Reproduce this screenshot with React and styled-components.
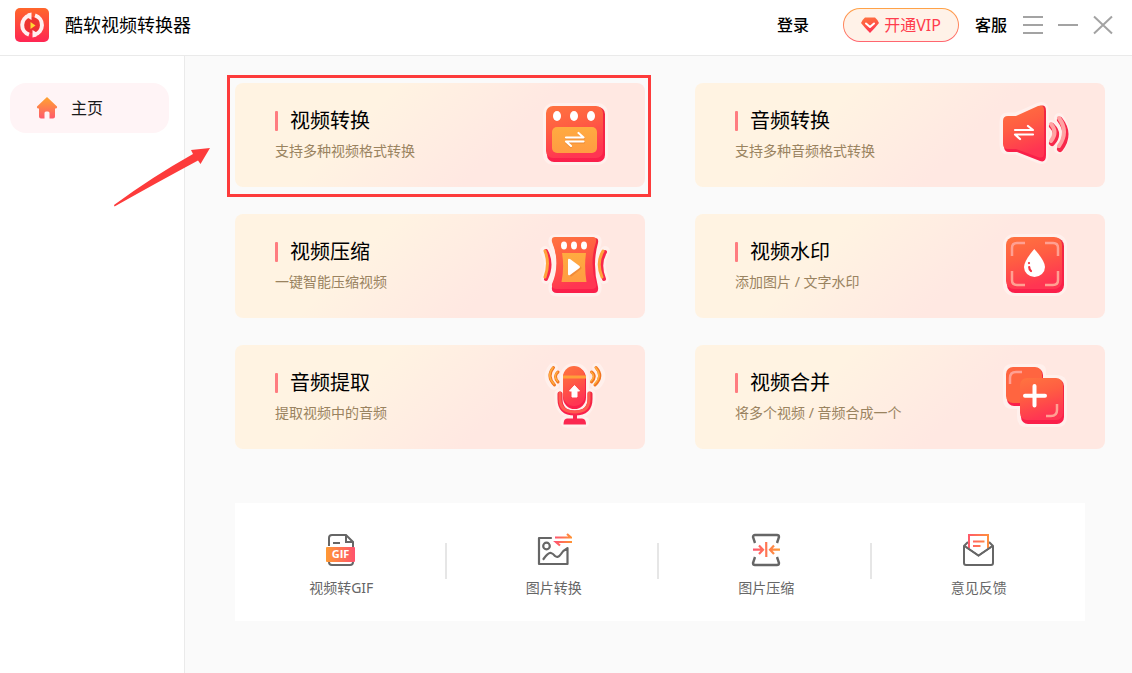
import styled, { createGlobalStyle } from 'styled-components';

const features = [
    { title: '视频转换', text: '支持多种视频格式转换', Icon: ConvertIcon, marked: true },
    { title: '音频转换', text: '支持多种音频格式转换', Icon: SpeakerIcon },
    { title: '视频压缩', text: '一键智能压缩视频', Icon: SqueezeIcon },
    { title: '视频水印', text: '添加图片 / 文字水印', Icon: WatermarkIcon },
    { title: '音频提取', text: '提取视频中的音频', Icon: MicIcon },
    { title: '视频合并', text: '将多个视频 / 音频合成一个', Icon: MergeIcon },
];

const tools = [
    { label: '视频转GIF', Icon: GifIcon },
    { label: '图片转换', Icon: PictureIcon },
    { label: '图片压缩', Icon: PictureSqueezeIcon },
    { label: '意见反馈', Icon: MailIcon },
];

export default function App(){
    return(
        <>
            <GlobalStyle />
            <Gradients />
            <Page>
                <Header>
                    <Logo />
                    <AppName>酷软视频转换器</AppName>
                    <HeaderButton>登录</HeaderButton>
                    <VipButton>
                        <Diamond />
                        开通VIP
                    </VipButton>
                    <HeaderButton>客服</HeaderButton>
                    <WindowButtons>
                        <IconButton aria-label='菜单'>
                            <svg width='20' height='20'><path d='M0 2H20M0 10H20M0 18H20' /></svg>
                        </IconButton>
                        <IconButton aria-label='最小化'>
                            <svg width='20' height='20'><path d='M0 10H20' /></svg>
                        </IconButton>
                        <IconButton aria-label='关闭'>
                            <svg width='20' height='20'><path d='M1 1.5L19 18.5M19 1.5L1 18.5' /></svg>
                        </IconButton>
                    </WindowButtons>
                </Header>
                <Body>
                    <Sidebar>
                        <NavItem href='#home'>
                            <HomeIcon />
                            主页
                        </NavItem>
                    </Sidebar>
                    <Main>
                        <Features>
                            {features.map(({ title, text, Icon, marked }) => (
                                <Card key={title}>
                                    <span>
                                        <CardTitle>{title}</CardTitle>
                                        <CardText>{text}</CardText>
                                    </span>
                                    <Icon />
                                    {marked && <Marker />}
                                    {marked && (
                                        <Arrow width='96' height='60' viewBox='0 0 96 60'>
                                            <path d='M0 58Q38 30 79 7L77 3L96 1L86.500 17L84 13.500Q44 35 .5 59.500Z' fill='#fd3b3b' />
                                        </Arrow>
                                    )}
                                </Card>
                            ))}
                        </Features>
                        <Tools>
                            {tools.map(({ label, Icon }) => (
                                <Tool key={label}>
                                    <Icon />
                                    {label}
                                </Tool>
                            ))}
                        </Tools>
                    </Main>
                </Body>
            </Page>
        </>
    )
}

// shared by every icon below
function Gradients(){
    return(
        <HiddenSvg width='0' height='0' aria-hidden='true'>
            <defs>
                <linearGradient id='hot' x1='0' y1='0' x2='0.3' y2='1'>
                    <stop offset='0' stopColor='#ff7440' />
                    <stop offset='0.45' stopColor='#ff5e42' />
                    <stop offset='1' stopColor='#ff3552' />
                </linearGradient>
                <linearGradient id='deep' x1='0' y1='0' x2='0' y2='1'>
                    <stop offset='0' stopColor='#f0283f' />
                    <stop offset='1' stopColor='#fb1f4b' />
                </linearGradient>
                <linearGradient id='amber' x1='0' y1='0' x2='0' y2='1'>
                    <stop offset='0' stopColor='#ffab40' />
                    <stop offset='1' stopColor='#ff9c42' />
                </linearGradient>
                <linearGradient id='house' x1='0' y1='0' x2='0' y2='1'>
                    <stop offset='0' stopColor='#ffa42f' />
                    <stop offset='1' stopColor='#ff5a6c' />
                </linearGradient>
                <linearGradient id='side' gradientUnits='userSpaceOnUse' x1='3' y1='0' x2='33' y2='0'>
                    <stop offset='0' stopColor='#ff9a33' />
                    <stop offset='1' stopColor='#ff5070' />
                </linearGradient>
                <linearGradient id='sideBack' gradientUnits='userSpaceOnUse' x1='5' y1='0' x2='32' y2='0'>
                    <stop offset='0' stopColor='#ff5470' />
                    <stop offset='1' stopColor='#ff9a33' />
                </linearGradient>
                <linearGradient id='swap' gradientUnits='userSpaceOnUse' x1='19' y1='0' x2='36' y2='0'>
                    <stop offset='0' stopColor='#ff5470' />
                    <stop offset='1' stopColor='#ff9433' />
                </linearGradient>
            </defs>
        </HiddenSvg>
    )
}

function Logo(){
    return(
        <svg width='34' height='34' viewBox='0 0 34 34'>
            <defs>
                <linearGradient id='logo' x1='0' y1='0' x2='0' y2='1'>
                    <stop offset='0' stopColor='#ff662b' />
                    <stop offset='1' stopColor='#ff2653' />
                </linearGradient>
            </defs>
            <rect width='34' height='34' rx='5' fill='url(#logo)' />
            <circle cx='17' cy='17' r='8' fill='#e62c2c' opacity='.7' />
            <path d='M14.500 7.500A10 10 0 0 0 14 26.600M19.500 26.600A10 10 0 0 0 20 7.400' fill='none' stroke='#fff0f0' strokeWidth='4' />
            <path d='M12.500 5.500L16.500 4.500V12L12.500 9.500ZM21.500 28.500L17.500 29.500V22L21.500 24.500Z' fill='#fff0f0' />
            <path d='M15.500 14L20.500 17.500L15.500 21Z' fill='#ffd834' />
        </svg>
    )
}

function Diamond(){
    return(
        <svg width='18' height='16' viewBox='0 0 18 16'>
            <path d='M4 .5H14Q17 3 18 6Q14 11 9 16Q4 11 0 6Q1 3 4 .5Z' fill='url(#hot)' />
            <path d='M5 6.500L9 10L13 6.500' fill='none' stroke='#fff' strokeWidth='2' strokeLinecap='round' strokeLinejoin='round' />
        </svg>
    )
}

function HomeIcon(){
    return(
        <svg width='22' height='22' viewBox='0 0 22 22'>
            <path d='M11 0L21 9.500Q21.500 11.500 19 11.500V19.500Q19 21.500 17 21.500H13.500V16Q13.500 14.500 12 14.500H10Q8.500 14.500 8.500 16V21.500H5Q3 21.500 3 19.500V11.500Q.5 11.500 1 9.500Z' fill='url(#house)' />
        </svg>
    )
}

function ConvertIcon(){
    return(
        <svg width='80' height='80' viewBox='0 0 80 80'>
            <rect x='8' y='8' width='65' height='62' rx='10' fill='#fff' opacity='.35' />
            <rect x='12' y='12' width='58' height='55' rx='7' fill='url(#deep)' />
            <rect x='11' y='11' width='57' height='52' rx='7' fill='url(#hot)' />
            <g fill='#fff'>
                <ellipse cx='22' cy='21' rx='4' ry='5' />
                <ellipse cx='39' cy='21' rx='4' ry='5' />
                <ellipse cx='56' cy='21' rx='4' ry='5' />
            </g>
            <rect x='17' y='32' width='45' height='26' rx='5' fill='url(#amber)' />
            <g fill='none' strokeWidth='2.2' strokeLinecap='round' strokeLinejoin='round'>
                <path d='M31 43.500H49L44 39M49 47.500H31L36 52' stroke='#d9742c' opacity='.5' />
                <path d='M31 42.500H48.500L43.500 38M48.500 46.500H31L36 51' stroke='#fff' />
            </g>
        </svg>
    )
}

function SpeakerIcon(){
    return(
        <svg width='80' height='80' viewBox='0 0 80 80'>
            <g stroke='#fff' strokeWidth='7' opacity='.35' strokeLinejoin='round' strokeLinecap='round'>
                <path d='M13 21H21L44 11Q50 9 50 16V60Q50 67 44 65L21 56H13Q8 56 8 50V27Q8 21 13 21Z' />
                <path d='M64 23Q75 38 64 54M56 30Q64 38 56 47' fill='none' strokeWidth='10' />
            </g>
            <path d='M14 22H22L45 11Q51 9 51 16V60Q51 68 45 66L22 57H14Q9 57 9 51V28Q9 22 14 22Z' fill='url(#deep)' />
            <path d='M13 21H21L43 11Q49 9 49 15V58Q49 64 43 62L21 54H13Q8 54 8 49V26Q8 21 13 21Z' fill='url(#hot)' />
            <path d='M20 35H38L33 31M38 39.500H20L25 44' fill='none' stroke='#fff' strokeWidth='2.2' strokeLinecap='round' strokeLinejoin='round' />
            <g fill='none' strokeLinecap='round'>
                <path d='M57 31Q65 39 57 48M65 25Q76 39 65 54' stroke='#f8284b' strokeWidth='6' />
                <path d='M56 29Q63 37 56 46M64 23Q74 37 64 51' stroke='#ffa3a3' strokeWidth='4' />
            </g>
        </svg>
    )
}

function SqueezeIcon(){
    return(
        <svg width='80' height='80' viewBox='0 0 80 80'>
            <g fill='none' stroke='#fff' opacity='.35' strokeLinejoin='round' strokeLinecap='round'>
                <path d='M20 12H60Q64 12 63 17Q56 38 63 60Q64 67 59 67H22Q16 67 17 60Q26 38 17 17Q16 12 20 12Z' strokeWidth='7' fill='#fff' />
                <path d='M10 25Q18 38 11 53M70 25Q62 38 69 53' strokeWidth='10' />
            </g>
            <path d='M21 12H60Q64 12 63 17Q57 38 63 61Q64 67 59 67H22Q16 67 17 61Q26 38 18 17Q17 12 21 12Z' fill='url(#deep)' />
            <path d='M20 11H58Q62 11 61 16Q54 37 61 58Q62 63 57 63H22Q16 63 17 58Q26 37 17 16Q16 11 20 11Z' fill='url(#hot)' />
            <g fill='#fff'>
                <ellipse cx='29' cy='19.500' rx='3' ry='4' />
                <ellipse cx='39' cy='19.500' rx='3' ry='4' />
                <ellipse cx='49' cy='19.500' rx='3' ry='4' />
            </g>
            <path d='M27 27H51Q49 41 51.500 56H26.500Q29.500 41 27 27Z' fill='url(#amber)' />
            <path d='M35 35.500Q35 34 37 35L46 41Q47 42 46 43L37 50Q35 51.500 35 49Z' fill='#e3762d' opacity='.5' />
            <path d='M33 34Q33 32 35 33L44.500 40Q45.500 41 44.500 42L35 49Q33 50 33 48Z' fill='#fff' />
            <g fill='none' strokeLinecap='round' strokeWidth='4'>
                <path d='M11 25Q18 38 11 53M70 26Q63 38 69 53' stroke='#f8284b' />
                <path d='M10 25Q15 37 10 51M68 25Q61 37 67 51' stroke='#ffa33c' strokeWidth='3' />
            </g>
        </svg>
    )
}

function WatermarkIcon(){
    return(
        <svg width='80' height='80' viewBox='0 0 80 80'>
            <rect x='8' y='8' width='64' height='62' rx='11' fill='#fff' opacity='.35' />
            <rect x='12' y='12' width='57' height='55' rx='8' fill='url(#deep)' />
            <rect x='11' y='11' width='56' height='52' rx='8' fill='url(#hot)' />
            <path d='M17 30V22Q17 17 22 17H30M50 17H58Q63 17 63 22V30M63 45V54Q63 59 58 59H50M30 59H22Q17 59 17 54V45' fill='none' stroke='#ffa092' strokeWidth='2.5' />
            <path d='M39.300 23Q50 35 50 41A10.500 10 0 0 1 29 41Q29 35 39.300 23Z' fill='#fff' />
            <path d='M34 37V37.100M34.200 41Q34.200 43.500 36 45' fill='none' stroke='#f5323f' strokeWidth='2.2' strokeLinecap='round' />
        </svg>
    )
}

function MicIcon(){
    return(
        <svg width='80' height='80' viewBox='0 0 80 80'>
            <g fill='none' stroke='#fff' opacity='.35' strokeLinecap='round' strokeLinejoin='round'>
                <rect x='28' y='9' width='23' height='43' rx='11' fill='#fff' strokeWidth='6' />
                <path d='M25 37V41Q25 56 39.500 56Q55 56 55 41V37M40 56V64M31 65H49' strokeWidth='11' />
                <path d='M18 11Q11 20 19 28M62 11Q69 20 61 28' strokeWidth='10' />
            </g>
            <g fill='none' stroke='url(#deep)' strokeLinecap='round' strokeWidth='5'>
                <path d='M25 37V42Q25 56 39.700 56Q55 56 55 42V37' />
                <path d='M40 57V63' stroke='#f8284b' strokeWidth='4' />
            </g>
            <path d='M25 36V42Q25 55 39.500 55Q54 55 54 42V36' fill='none' stroke='#ff5b50' strokeWidth='3' strokeLinecap='round' />
            <path d='M32 61.500H47Q51 61.500 51 67.500H28.500Q28.500 61.500 32 61.500Z' fill='#fb2850' />
            <rect x='28' y='10' width='23' height='42' rx='11.500' fill='url(#deep)' />
            <rect x='28' y='9' width='22' height='40' rx='11' fill='url(#hot)' />
            <path d='M28 20H51' stroke='#ffa03a' strokeWidth='3' />
            <path d='M39.500 28.500L44.500 34H42V40H37V34H34.500Z' fill='#fff' stroke='#fff' strokeLinejoin='round' />
            <g fill='none' strokeLinecap='round'>
                <path d='M18.500 10.500Q11 19 19.500 28M23 15Q18 19 23 25M61 10.500Q69 19 60 28M56.500 15Q62 19 56.500 25' stroke='#f27420' strokeWidth='3' />
                <path d='M18 10.500Q11 19 19 27M22.500 15Q18 19 22.500 24M60.500 10.500Q68 19 59.500 27M56 15Q61 19 56 24' stroke='#ffad40' strokeWidth='1.5' />
            </g>
        </svg>
    )
}

function MergeIcon(){
    return(
        <svg width='80' height='80' viewBox='0 0 80 80'>
            <g fill='#fff' opacity='.35'>
                <path d='M17 7H44Q51 7 51 14V18H62Q72 18 72 28V60Q72 70 62 70H32Q22 70 22 60V52H18Q8 52 8 43V16Q8 7 17 7Z' />
            </g>
            <rect x='12' y='11' width='36' height='38' rx='7' fill='url(#deep)' />
            <rect x='11' y='10' width='36' height='36' rx='7' fill='#ff6540' />
            <rect x='26' y='22' width='43' height='45' rx='7' fill='url(#deep)' />
            <rect x='25' y='21' width='43' height='42' rx='7' fill='url(#hot)' />
            <path d='M15 27V21Q15 15 21 15H27M62 47V53Q62 59 56 59H51' fill='none' stroke='#ffa092' strokeWidth='2.5' />
            <path d='M39.500 29V48.500M30 38.700H50' stroke='#fff' strokeWidth='4' strokeLinecap='round' />
        </svg>
    )
}

function GifIcon(){
    return(
        <svg width='36' height='36' viewBox='0 0 36 36'>
            <path d='M6 14V6Q6 3 9 3H23L30 10V14M6 30Q6 33 9 33H27Q30 33 30 30M23 3V10H30M10 11H17' fill='none' stroke='#666' strokeWidth='2' />
            <path d='M6 14V6M30 10V16' stroke='#666' strokeWidth='2' />
            <rect x='3' y='15' width='29' height='15' rx='1' fill='url(#side)' />
            <GifText x='17.500' y='26' textAnchor='middle'>GIF</GifText>
        </svg>
    )
}

function PictureIcon(){
    return(
        <svg width='36' height='36' viewBox='0 0 36 36'>
            <g fill='none' stroke='#666' strokeWidth='2.2' strokeLinejoin='round' strokeLinecap='round'>
                <path d='M15 6H3V32H31.500V16M7.500 27Q12 20.500 15 21Q17 21.500 19 24Q22 26.500 25 22Q27 18.500 31 16.500' />
                <circle cx='10.500' cy='14' r='3.300' />
            </g>
            <path d='M19 5.500H35L31 2M36 10H20L24 13.500' fill='none' stroke='url(#swap)' strokeWidth='2.2' />
        </svg>
    )
}

function PictureSqueezeIcon(){
    return(
        <svg width='36' height='36' viewBox='0 0 36 36'>
            <path d='M7 11L5 5Q5 3 7 3H29Q31 3 31 5L29 11M7 25L5 31Q5 33 7 33H29Q31 33 31 31L29 25' fill='none' stroke='#666' strokeWidth='2.4' />
            <path d='M5 17.600L14.500 17.700M11 13.500L15 17.700L11 22M18.200 10L18.300 25M32 17.600L22.500 17.700M26 13.500L22 17.700L26 22' fill='none' stroke='url(#sideBack)' strokeWidth='2.2' />
        </svg>
    )
}

function MailIcon(){
    return(
        <svg width='36' height='36' viewBox='0 0 36 36'>
            <path d='M7 10L3 14V31Q3 33 5 33H30Q32 33 32 31V14L28 10M3.500 14L17.500 23.500L31.500 14' fill='none' stroke='#666' strokeWidth='2' strokeLinejoin='round' />
            <path d='M8 16V3H27V16L17.500 22.500Z' fill='#fff' />
            <path d='M8 16V3H27V16M12 9.500L23.500 9.600M12 14L19.500 14.100' fill='none' stroke='url(#sideBack)' strokeWidth='2' />
            <path d='M5 15L17.500 23.500L30 15' fill='none' stroke='#666' strokeWidth='2' />
        </svg>
    )
}

const GlobalStyle = createGlobalStyle`
    * {
        box-sizing: border-box;
    }
    body {
        margin: 0;
        font-family: 'Noto Sans', 'Noto Sans CJK SC', sans-serif;
        color: #000000;
    }
    button {
        font-family: inherit;
        color: inherit;
        border: none;
        background: none;
        padding: 0;
        cursor: pointer;
    }
    svg {
        flex-shrink: 0;
    }
`;

const HiddenSvg = styled.svg`
    position: absolute;
`;

const Page = styled.div`
    display: flex;
    flex-direction: column;
    min-height: 100vh;
    background-color: #FFFFFF;
`;

const Header = styled.header`
    display: flex;
    align-items: center;
    gap: 16px;
    height: 56px;
    padding: 0px 19px 6px 15px;
    border-bottom: 1px solid #EAEAEA;
`;

const AppName = styled.h1`
    flex: 1;
    margin: 0;
    font-weight: 400;
    font-size: 18px;
    line-height: 26px;
`;

const HeaderButton = styled.button`
    font-weight: 500;
    font-size: 16px;
    line-height: 24px;
`;

const VipButton = styled.button`
    display: flex;
    align-items: center;
    justify-content: center;
    gap: 5px;
    width: 116px;
    height: 34px;
    margin-left: 18px;
    border: 1px solid transparent;
    border-radius: 17px;
    background: linear-gradient(#FFF2E8, #FFF2E8) padding-box,
        linear-gradient(#FFA347, #FF6570) border-box;
    font-size: 16px;
    line-height: 24px;
    color: #FF3D4D;
`;

const WindowButtons = styled.div`
    display: flex;
    gap: 15px;
`;

const IconButton = styled.button`
    display: flex;

    path {
        stroke: #A3A3A3;
        stroke-width: 2;
    }
`;

const Body = styled.div`
    display: flex;
    flex: 1;
`;

const Sidebar = styled.nav`
    flex-shrink: 0;
    width: 185px;
    padding: 27px 15px 0px 10px;
    border-right: 1px solid #EAEAEA;
`;

const NavItem = styled.a`
    display: flex;
    align-items: center;
    gap: 13px;
    height: 50px;
    padding-left: 26px;
    border-radius: 16px;
    background-color: #FFF4F6;
    font-size: 16px;
    line-height: 24px;
    color: #1A1A1A;
    text-decoration: none;
`;

const Main = styled.main`
    flex: 1;
    padding: 27px 27px 52px 50px;
    background-color: #FAFAFA;
`;

const Features = styled.div`
    display: grid;
    grid-template-columns: 1fr 1fr;
    gap: 27px 50px;
`;

const Card = styled.button`
    position: relative;
    display: flex;
    align-items: center;
    justify-content: space-between;
    height: 104px;
    padding: 0px 30px 0px 40px;
    border-radius: 8px;
    background: linear-gradient(135deg, #FFF3E2 32%, #FFE8E2 64%);
    text-align: left;
`;

const CardTitle = styled.span`
    display: flex;
    align-items: center;
    gap: 12px;
    font-size: 20px;
    line-height: 28px;

    &::before {
        content: '';
        width: 3px;
        height: 20px;
        border-radius: 1px;
        background-color: #FF7C80;
    }
`;

const CardText = styled.span`
    display: block;
    margin-top: 6px;
    padding-bottom: 2px;
    font-size: 14px;
    line-height: 20px;
    color: #9A8360;
`;

const Marker = styled.span`
    position: absolute;
    inset: -8px -6px -10px -8px;
    border: 3px solid #FD3B3B;
    pointer-events: none;
`;

const Arrow = styled.svg`
    position: absolute;
    left: -121px;
    top: 64px;
    pointer-events: none;
`;

const Tools = styled.div`
    display: flex;
    margin: 54px 20px 0px 0px;
    background-color: #FFFFFF;
`;

const Tool = styled.button`
    position: relative;
    display: flex;
    flex: 1;
    flex-direction: column;
    align-items: center;
    gap: 10px;
    padding: 29px 0px 23px;
    font-size: 14px;
    line-height: 20px;
    color: #666666;

    & + &::before {
        content: '';
        position: absolute;
        left: -3px;
        top: 40px;
        width: 2px;
        height: 36px;
        background-color: #E6E6E6;
    }
`;

const GifText = styled.text`
    font-family: 'Open Sans', sans-serif;
    font-weight: 700;
    font-size: 11px;
    fill: #FFFFFF;
`;
